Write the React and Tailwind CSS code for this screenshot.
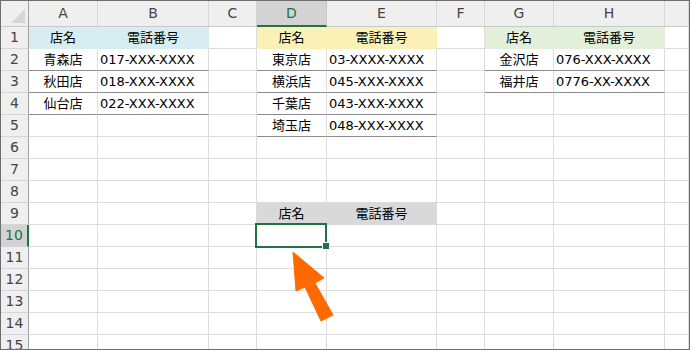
import React from "react";

const COLS = ["A", "B", "C", "D", "E", "F", "G", "H", "I"];
const ROWS = [1, 2, 3, 4, 5, 6, 7, 8, 9, 10, 11, 12, 13, 14, 15];

const FILL = {
  blue: "bg-[#d7edf2] border-[#d7edf2]",
  yellow: "bg-[#fbf1b7] border-[#fbf1b7]",
  green: "bg-[#e2efda] border-[#e2efda]",
  gray: "bg-[#d9d9d9] border-[#d9d9d9]",
};

// build the cell map from the little tables on the sheet
const tables = [
  {
    cols: ["A", "B"],
    top: 1,
    fill: "blue",
    rows: [
      ["青森店", "017-XXX-XXXX"],
      ["秋田店", "018-XXX-XXXX"],
      ["仙台店", "022-XXX-XXXX"],
    ],
  },
  {
    cols: ["D", "E"],
    top: 1,
    fill: "yellow",
    rows: [
      ["東京店", "03-XXXX-XXXX"],
      ["横浜店", "045-XXX-XXXX"],
      ["千葉店", "043-XXX-XXXX"],
      ["埼玉店", "048-XXX-XXXX"],
    ],
  },
  {
    cols: ["G", "H"],
    top: 1,
    fill: "green",
    rows: [
      ["金沢店", "076-XXX-XXXX"],
      ["福井店", "0776-XX-XXXX"],
    ],
  },
  { cols: ["D", "E"], top: 9, fill: "gray", rows: [] },
];

const cells = {};
tables.forEach((tb) => {
  cells[tb.cols[0] + tb.top] = { t: "店名", fill: tb.fill, center: true };
  cells[tb.cols[1] + tb.top] = { t: "電話番号", fill: tb.fill, center: true };
  tb.rows.forEach((r, i) => {
    const row = tb.top + 1 + i;
    cells[tb.cols[0] + row] = { t: r[0], center: true, line: true };
    cells[tb.cols[1] + row] = { t: r[1], line: true };
  });
});

function Cell({ id }) {
  const c = cells[id];
  if (!c) {
    return <div className="h-[22px] border-r border-b border-[#dcdcdc]" />;
  }
  let cls = "h-[22px] border-r border-b flex items-center text-[13px] text-black whitespace-nowrap overflow-hidden ";
  if (c.fill) cls += FILL[c.fill];
  else if (c.line) cls += "border-r-[#dcdcdc] border-b-[#8c8c8c]";
  cls += c.center ? " justify-center" : " pl-[2px]";
  return <div className={cls}>{c.t}</div>;
}

export default function App() {
  return (
    <div className="relative w-[690px] h-[350px] overflow-hidden bg-white border border-[#6e6e6e] font-['DejaVu_Sans','Noto_Sans_CJK_JP',sans-serif]">
      <div className="grid grid-cols-[28px_69px_111px_48px_70px_110px_48px_69px_111px_24px]">
        {/* corner */}
        <div className="h-[26px] bg-[#efefef] border-r border-b border-r-[#a0a0a0] border-b-[#c8c8c8]">
          <svg width="27" height="25" className="block">
            <polygon points="24,8 24,22 10,22" fill="#d6d6d6" />
          </svg>
        </div>
        {COLS.map((c) =>
          c === "D" ? (
            <div
              key={c}
              className="h-[26px] bg-[#d3d3d3] border-r border-r-[#c8c8c8] border-b-2 border-b-[#217346] flex items-center justify-center text-[14px] text-[#217346]"
            >
              {c}
            </div>
          ) : (
            <div
              key={c}
              className="h-[26px] bg-[#efefef] border-r border-b border-r-[#d6d6d6] border-b-[#c8c8c8] flex items-center justify-center text-[14px] text-[#444]"
            >
              {c === "I" ? "" : c}
            </div>
          )
        )}
        {ROWS.map((r) => (
          <React.Fragment key={r}>
            {r === 10 ? (
              <div className="h-[22px] bg-[#d3d3d3] border-b border-b-[#d6d6d6] border-r-2 border-r-[#217346] flex items-center justify-center text-[14px] text-[#217346]">
                {r}
              </div>
            ) : (
              <div className="h-[22px] bg-[#efefef] border-b border-r border-b-[#d6d6d6] border-r-[#a0a0a0] flex items-center justify-center text-[14px] text-[#444]">
                {r}
              </div>
            )}
            {COLS.map((c) => (
              <Cell key={c + r} id={c + r} />
            ))}
          </React.Fragment>
        ))}
      </div>

      {/* active cell D10 */}
      <div className="absolute left-[254px] top-[222px] w-[72px] h-[25px] border-2 border-[#217346]" />
      <div className="absolute left-[321px] top-[241px] w-[8px] h-[8px] bg-[#217346] border border-white" />

      {/* orange arrow */}
      <svg className="absolute left-[-1px] top-[-1px]" width="690" height="350">
        <polygon
          points="293,252 324,278 315,283 333,315 321,321 305,287 296,291"
          fill="#ff6a00"
          stroke="#ff6a00"
          strokeWidth="1"
          strokeLinejoin="round"
        />
      </svg>
    </div>
  );
}
